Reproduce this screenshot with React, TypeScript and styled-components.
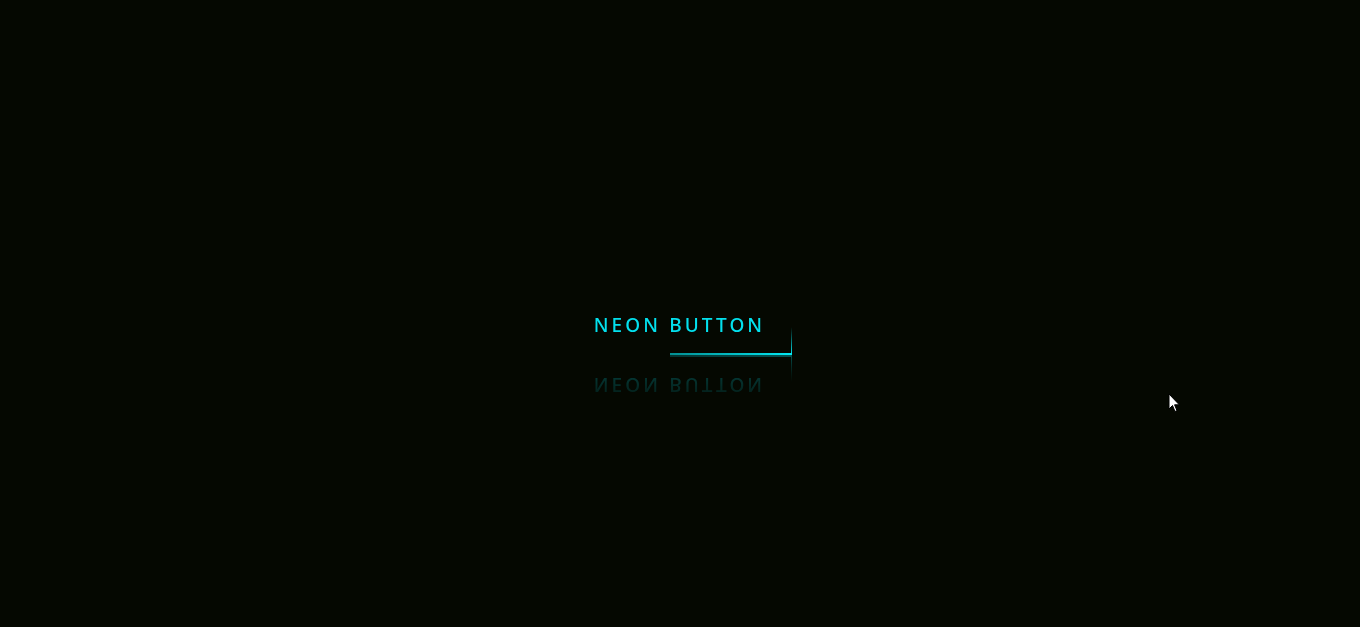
import React from "react";
import styled, { createGlobalStyle } from "styled-components";

const Global = createGlobalStyle`
  html, body { margin: 0; padding: 0; background: #050801; }
  body { font-family: "Noto Sans", "Open Sans", sans-serif; }
`;

const Page = styled.div`
  width: 1360px;
  height: 627px;
  display: flex;
  align-items: center;
  justify-content: center;
  background: #050801;
  position: relative;
  overflow: hidden;
`;

const Neon = styled.a`
  position: relative;
  display: inline-block;
  padding: 17px 27px 17px 24px;
  margin-top: 22px;
  margin-left: 2px;
  color: #03e1ee;
  font-size: 19px;
  font-weight: 500;
  line-height: 26px;
  letter-spacing: 3.1px;
  text-transform: uppercase;
  text-decoration: none;
  overflow: hidden;
  -webkit-box-reflect: below 0px linear-gradient(transparent, #0005);
`;

const Line = styled.span<{ $side: "right" | "bottom" }>`
  position: absolute;
  display: block;
  ${(p) =>
    p.$side === "right"
      ? `right: 0; bottom: 0; width: 1px; height: 28px;
         background: linear-gradient(180deg, transparent, #03e9f4);`
      : `bottom: 0; right: 0; height: 2px; width: 122px;
         background: linear-gradient(90deg, rgba(3,233,244,0.6), #03e9f4);`}
`;

const Cursor = styled.svg`
  position: absolute;
  left: 1168px;
  top: 393px;
`;

export default function App() {
  return (
    <>
      <Global />
      <Page>
        <Neon href="#">
          <Line $side="right" />
          <Line $side="bottom" />
          Neon Button
        </Neon>
        <Cursor width="14" height="22" viewBox="0 0 14 22">
          <path d="M1 1 L1 16 L4.5 12.5 L7 18.5 L9 17.7 L6.6 11.8 L11.3 11.8 Z" fill="#fff" stroke="#000" strokeWidth="1" />
        </Cursor>
      </Page>
    </>
  );
}
